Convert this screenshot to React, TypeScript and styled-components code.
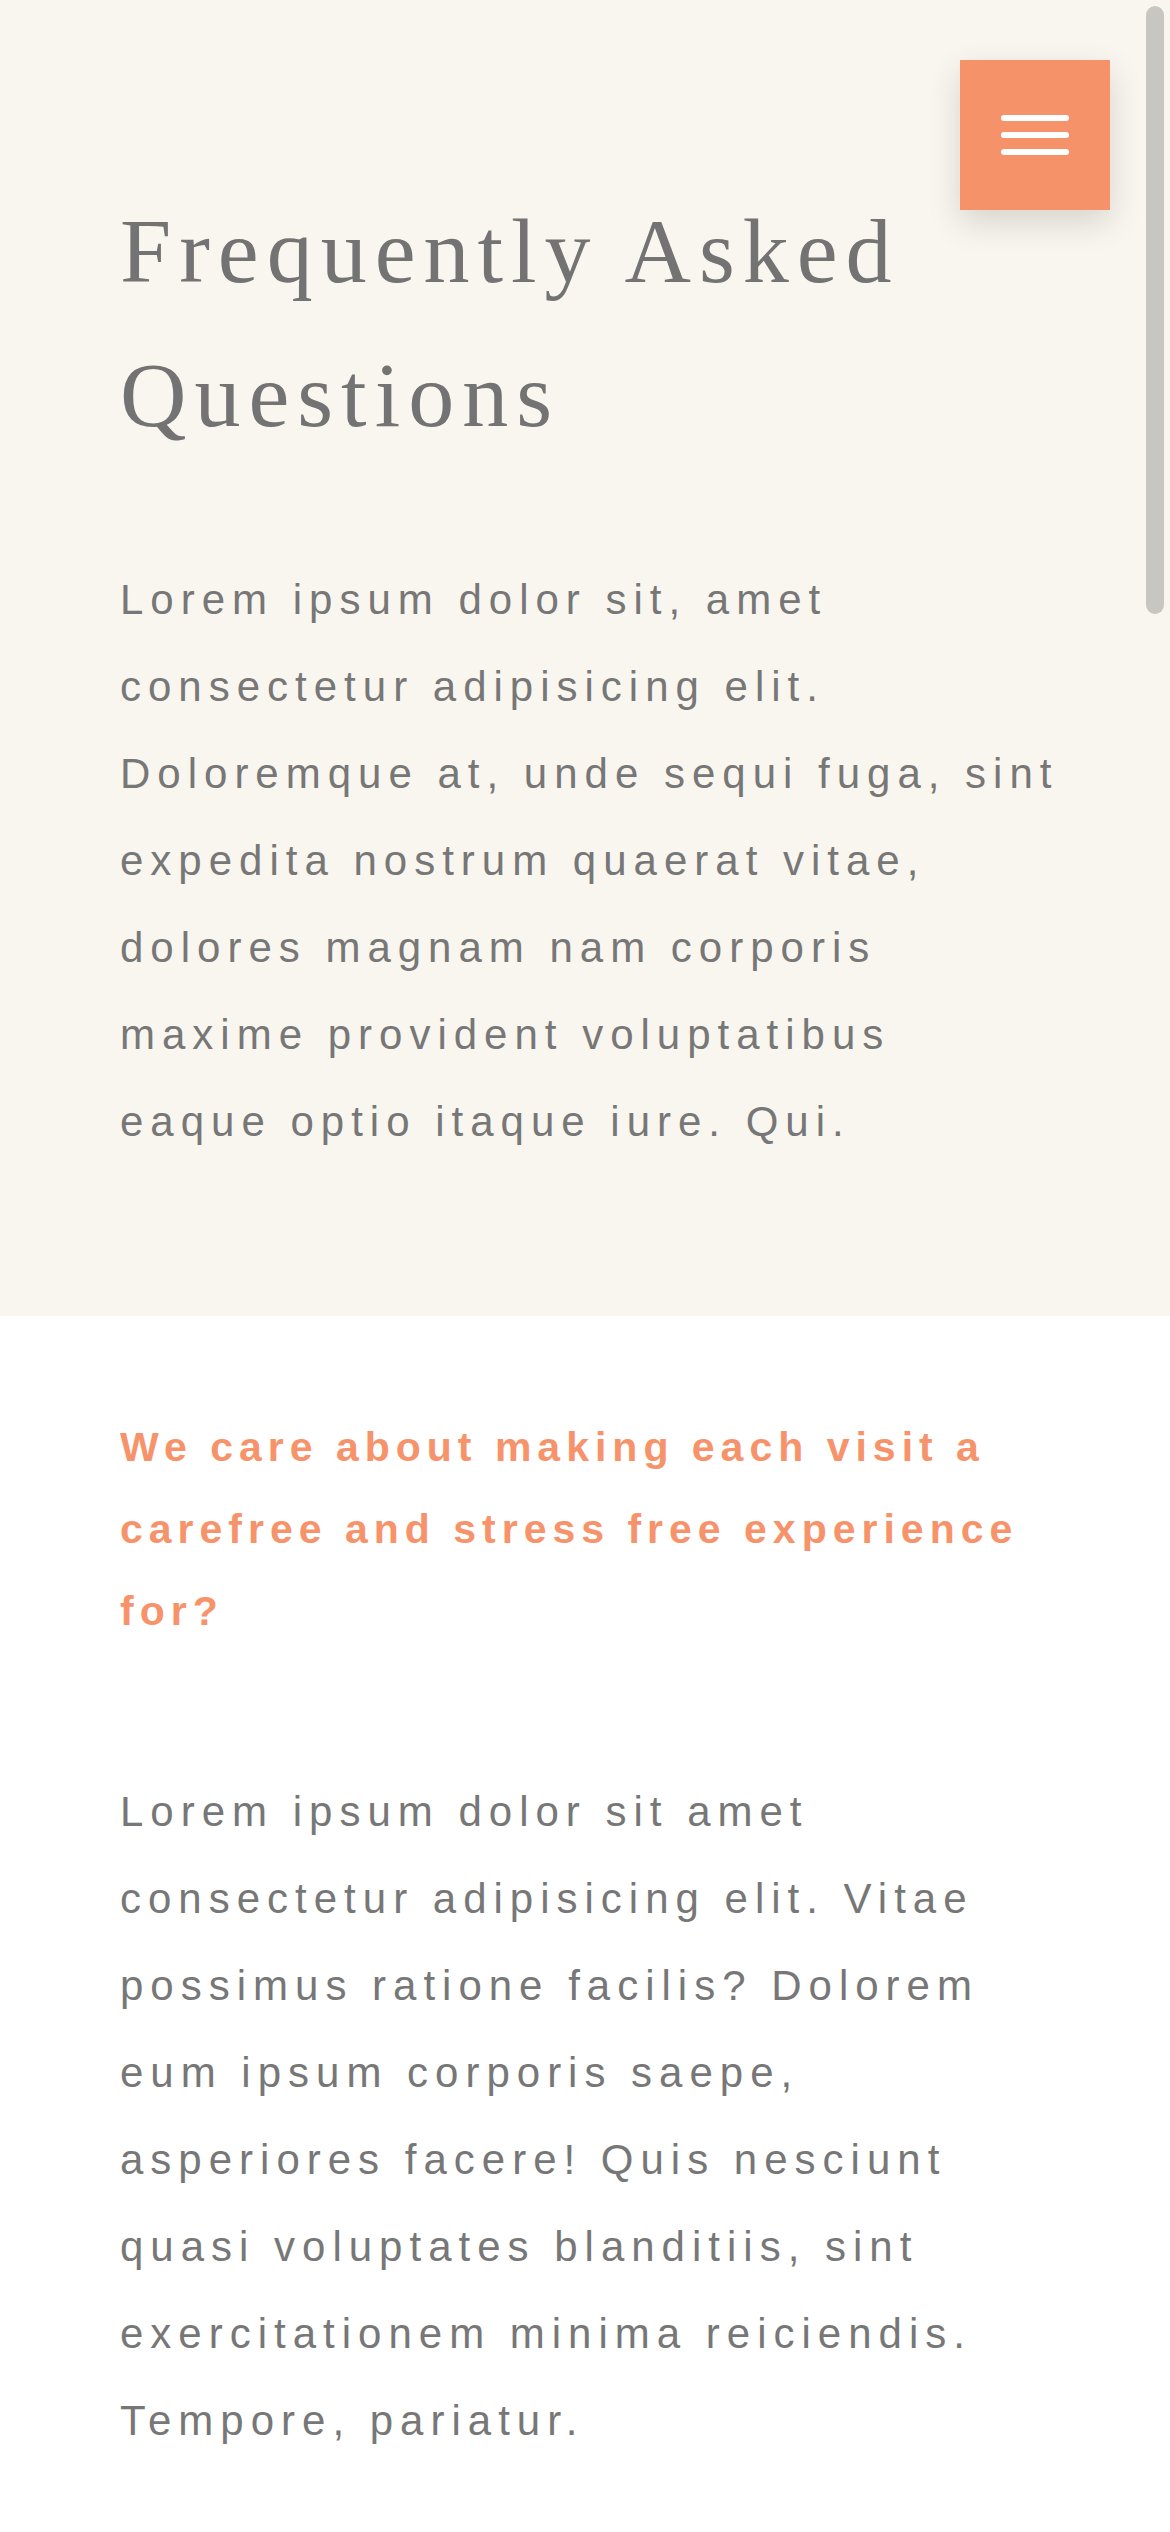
import styled, { createGlobalStyle } from "styled-components";

const GlobalStyle = createGlobalStyle`
  html, body {
    margin: 0;
    padding: 0;
    overflow: hidden;
    background: #ffffff;
  }
  * {
    box-sizing: border-box;
  }
`;

const Page = styled.div`
  position: relative;
  width: 1170px;
  min-height: 2532px;
  background: #ffffff;
`;

const Intro = styled.section`
  background: #f9f6ef;
  padding: 179px 120px 151px;
`;

const Title = styled.h1`
  margin: 0;
  font-family: "Liberation Serif", "Times New Roman", serif;
  font-weight: 400;
  font-size: 92px;
  line-height: 144px;
  letter-spacing: 8px;
  color: #737373;
`;

const Text = styled.p<{ $gap?: number }>`
  margin: ${(p) => p.$gap ?? 0}px 0 0;
  font-family: "Liberation Sans", Arial, sans-serif;
  font-weight: 400;
  font-size: 42px;
  line-height: 87px;
  letter-spacing: 7px;
  white-space: nowrap;
  color: #777777;
`;

const Faq = styled.section`
  padding: 90px 120px 67px;
`;

const Question = styled.h3`
  margin: 0;
  font-family: "Liberation Sans", Arial, sans-serif;
  font-weight: 700;
  font-size: 41px;
  line-height: 82px;
  letter-spacing: 6px;
  white-space: nowrap;
  color: #f7936a;
`;

const MenuButton = styled.button`
  position: absolute;
  top: 60px;
  right: 60px;
  width: 150px;
  height: 150px;
  border: none;
  padding: 0;
  background: #f6926a;
  box-shadow: 0 12px 32px rgba(0, 0, 0, 0.14);
  display: flex;
  flex-direction: column;
  align-items: center;
  justify-content: center;
  gap: 11px;
  cursor: pointer;
`;

const Bar = styled.span`
  display: block;
  width: 68px;
  height: 6px;
  border-radius: 3px;
  background: #ffffff;
`;

const ScrollThumb = styled.div`
  position: fixed;
  top: 6px;
  right: 6px;
  width: 18px;
  height: 608px;
  border-radius: 9px;
  background: #c7c6c1;
`;

export default function App() {
  return (
    <Page>
      <GlobalStyle />
      <Intro>
        <Title>Frequently Asked Questions</Title>
        <Text $gap={89}>
          Lorem ipsum dolor sit, amet
          <br />
          consectetur adipisicing elit.
          <br />
          Doloremque at, unde sequi fuga, sint
          <br />
          expedita nostrum quaerat vitae,
          <br />
          dolores magnam nam corporis
          <br />
          maxime provident voluptatibus
          <br />
          eaque optio itaque iure. Qui.
        </Text>
      </Intro>
      <Faq>
        <Question>
          We care about making each visit a
          <br />
          carefree and stress free experience
          <br />
          for?
        </Question>
        <Text $gap={116}>
          Lorem ipsum dolor sit amet
          <br />
          consectetur adipisicing elit. Vitae
          <br />
          possimus ratione facilis? Dolorem
          <br />
          eum ipsum corporis saepe,
          <br />
          asperiores facere! Quis nesciunt
          <br />
          quasi voluptates blanditiis, sint
          <br />
          exercitationem minima reiciendis.
          <br />
          Tempore, pariatur.
        </Text>
      </Faq>
      <MenuButton aria-label="Open menu">
        <Bar />
        <Bar />
        <Bar />
      </MenuButton>
      <ScrollThumb />
    </Page>
  );
}
